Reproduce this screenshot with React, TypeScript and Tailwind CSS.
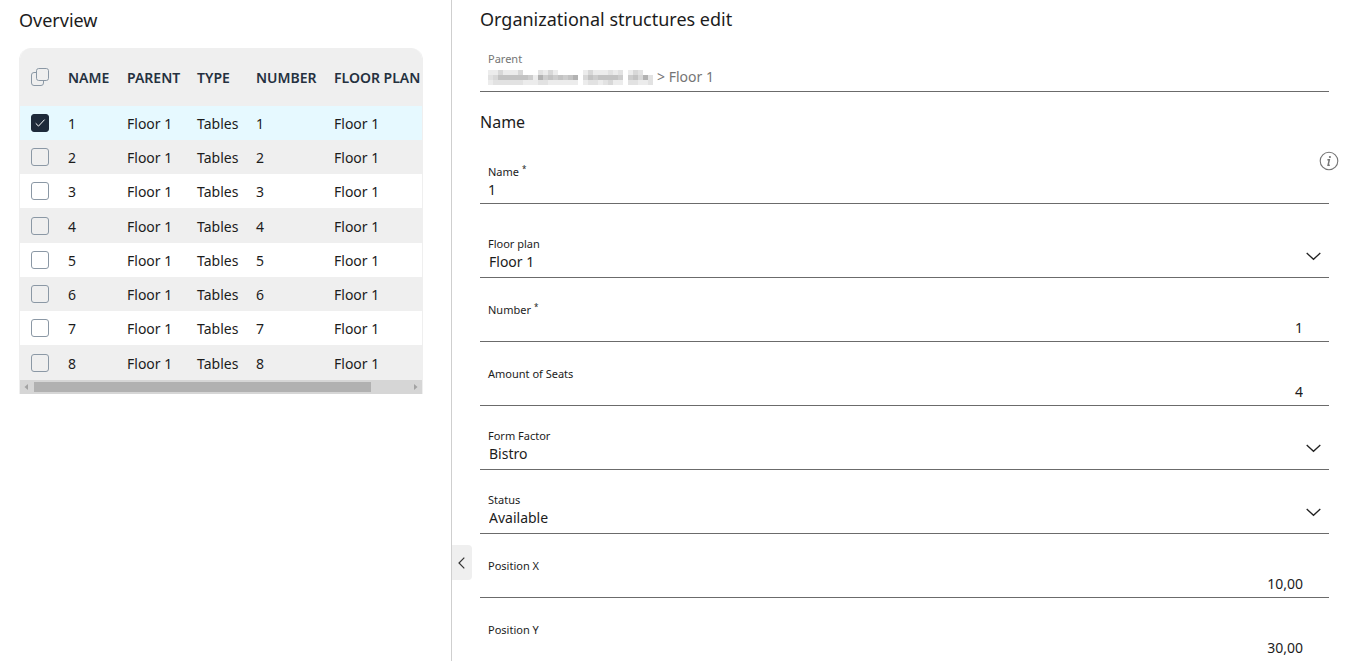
import { useState } from "react";

interface TableRow {
  id: number;
  name: string;
  parent: string;
  type: string;
  number: string;
  floorPlan: string;
}

const ROWS: TableRow[] = [1, 2, 3, 4, 5, 6, 7, 8].map((n) => ({
  id: n,
  name: String(n),
  parent: "Floor 1",
  type: "Tables",
  number: String(n),
  floorPlan: "Floor 1",
}));

// Grey levels of the redacted company name, one digit per 5px block (0 = clear)
const MOSAIC = [
  "113111300021310000013111212013200",
  "235555554164545456035455554045362",
  "122222211122111111012212311022112",
];

const SHADES = ["none", "#ececec", "#e2e2e2", "#d8d8d8", "#cdcdcd", "#c3c3c3", "#b2b2b2"];

function RedactedName() {
  return (
    <svg width="165" height="15" viewBox="0 0 165 15" shapeRendering="crispEdges" aria-label="Hidden company name">
      {MOSAIC.map((line, y) =>
        line.split("").map((level, x) => (
          <rect key={`${x}-${y}`} x={x * 5} y={y * 5} width="5" height="5" fill={SHADES[Number(level)]} />
        ))
      )}
    </svg>
  );
}

function CopyIcon() {
  return (
    <svg width="18" height="18" viewBox="0 0 18 18" fill="none" stroke="#8b98a5" strokeWidth="1">
      <rect x="5.5" y="0.5" width="12" height="12" rx="2.2" />
      <path d="M5.500 4.500H3a2.500 2.500 0 0 0-2.500 2.500v8a2.500 2.500 0 0 0 2.500 2.500h7a2.500 2.500 0 0 0 2.500-2.500v-2.500" />
    </svg>
  );
}

interface FieldProps {
  id: string;
  label: string;
  value: string;
  required?: boolean;
  numeric?: boolean;
}

function TextField({ id, label, value, required, numeric }: FieldProps) {
  return (
    <div className="flex h-16 flex-col justify-end border-b border-[#6b6b6b] px-2 pb-[3px]">
      <label htmlFor={id} className="text-[11px] leading-4">
        {label}
        {required && <span className="relative -top-1 pl-[3px] text-[8px] leading-none">*</span>}
      </label>
      <input
        id={id}
        type="text"
        defaultValue={value}
        className={
          numeric
            ? "h-5 w-full bg-transparent pr-[18px] text-right text-sm outline-none"
            : "h-5 w-full bg-transparent text-sm outline-none"
        }
      />
    </div>
  );
}

function SelectField({ id, label, value }: FieldProps) {
  return (
    <div className="relative flex h-16 flex-col justify-end border-b border-[#6b6b6b] px-2 pb-[5px]">
      <label htmlFor={id} className="text-[11px] leading-4">
        {label}
      </label>
      <select id={id} defaultValue={value} className="h-5 w-full appearance-none bg-transparent pl-px text-sm outline-none">
        <option>{value}</option>
      </select>
      <svg
        className="pointer-events-none absolute right-2 bottom-4 text-[#222222]"
        width="15"
        height="9"
        viewBox="0 0 15 9"
        fill="none"
        stroke="currentColor"
        strokeWidth="1.3"
      >
        <path d="M0.7 1L7.5 7.3L14.3 1" />
      </svg>
    </div>
  );
}

export default function App() {
  const [selected, setSelected] = useState<number[]>([1]);

  const toggle = (id: number) => {
    setSelected((prev) => (prev.includes(id) ? prev.filter((x) => x !== id) : [...prev, id]));
  };

  return (
    <div className="flex h-screen overflow-hidden bg-white font-['Noto_Sans',sans-serif] text-sm text-[#1c1c1c]">
      {/* Overview list */}
      <aside className="w-[452px] shrink-0 border-r border-[#cfcfcf] pt-2 pr-7 pl-[19px]">
        <h1 className="text-lg leading-6">Overview</h1>

        <div className="mt-4 overflow-hidden rounded-t-xl border-x border-[#efefef]">
          <table className="w-full table-fixed border-collapse text-left">
            <colgroup>
              <col className="w-12" />
              <col className="w-[59px]" />
              <col className="w-[70px]" />
              <col className="w-[59px]" />
              <col className="w-[78px]" />
              <col />
            </colgroup>
            <thead>
              <tr className="h-[58px] bg-[#efefef] whitespace-nowrap text-[#25313f]">
                <th className="pl-[11px]">
                  <button type="button" aria-label="Select all" className="block">
                    <CopyIcon />
                  </button>
                </th>
                <th className="pt-[2px] font-semibold">NAME</th>
                <th className="pt-[2px] font-semibold">PARENT</th>
                <th className="pt-[2px] font-semibold">TYPE</th>
                <th className="pt-[2px] font-semibold">NUMBER</th>
                <th className="pt-[2px] font-semibold">FLOOR PLAN</th>
              </tr>
            </thead>
            <tbody>
              {ROWS.map((row) => {
                const checked = selected.includes(row.id);
                return (
                  <tr
                    key={row.id}
                    className={
                      checked
                        ? "h-[34px] bg-[#e6f9ff] nth-[4n]:h-[35px]"
                        : "h-[34px] even:bg-[#efefef] nth-[4n]:h-[35px]"
                    }
                  >
                    <td className="pl-[11px]">
                      <label className="relative block size-[18px]">
                        <input
                          type="checkbox"
                          checked={checked}
                          onChange={() => toggle(row.id)}
                          aria-label={`Select table ${row.name}`}
                          className="block size-[18px] appearance-none rounded-[3px] border border-[#8b98a5] checked:border-[#1e2a3a] checked:bg-[#1e2a3a]"
                        />
                        {checked && (
                          <svg
                            className="pointer-events-none absolute inset-0"
                            width="18"
                            height="18"
                            viewBox="0 0 18 18"
                            fill="none"
                            stroke="#ffffff"
                            strokeWidth="1"
                          >
                            <path d="M4.7 9.3L7.500 12.100L13.600 5.600" />
                          </svg>
                        )}
                      </label>
                    </td>
                    <td className="pt-[2px]">{row.name}</td>
                    <td className="pt-[2px]">{row.parent}</td>
                    <td className="pt-[2px]">{row.type}</td>
                    <td className="pt-[2px]">{row.number}</td>
                    <td className="pt-[2px]">{row.floorPlan}</td>
                  </tr>
                );
              })}
            </tbody>
          </table>

          {/* Horizontal scrollbar */}
          <div className="flex h-[14px] items-center bg-[#d6d6d6] text-[#a3a3a3]">
            <svg className="w-[14px] shrink-0" height="8" viewBox="0 0 14 8" fill="currentColor">
              <path d="M8 1v6L4.500 4z" />
            </svg>
            <div className="h-[10px] flex-1">
              <div className="h-full w-[90%] bg-[#b1b1b1]" />
            </div>
            <svg className="w-[14px] shrink-0" height="8" viewBox="0 0 14 8" fill="currentColor">
              <path d="M6 1v6l3.500-3z" />
            </svg>
          </div>
        </div>
      </aside>

      {/* Edit form */}
      <main className="relative min-w-0 flex-1 pt-[7px] pr-8 pl-7">
        <button
          type="button"
          aria-label="Collapse overview"
          className="absolute top-[545px] left-0 flex h-[35px] w-5 items-center justify-center rounded-r bg-[#efefef] pr-px"
        >
          <svg width="7" height="12" viewBox="0 0 7 12" fill="none" stroke="#333333" strokeWidth="1.2">
            <path d="M6.300 0.700L1 6l5.300 5.300" />
          </svg>
        </button>

        <h2 className="text-lg leading-6">Organizational structures edit</h2>

        <div className="flex h-[61px] flex-col justify-end border-b border-[#6b6b6b] px-2 pb-1 text-[#757575]">
          <span className="text-[11px] leading-4">Parent</span>
          <div className="flex h-5 items-center gap-1">
            <RedactedName />
            <span>&gt; Floor 1</span>
          </div>
        </div>

        <h3 className="mt-[18px] text-base leading-6">Name</h3>

        <form className="mt-[6px]">
          <div className="relative">
            <TextField id="name" label="Name" value="1" required />
            <button type="button" aria-label="Information" className="absolute top-[11px] -right-[10px]">
              <svg width="20" height="20" viewBox="0 0 20 20" fill="none" stroke="#757575">
                <circle cx="10" cy="10" r="8.800" strokeWidth="1.100" />
                <circle cx="10.900" cy="6" r="1.100" fill="#757575" stroke="none" />
                <path d="M8.400 8.700h1.900L9.100 14.200h1.700" strokeWidth="1.500" />
              </svg>
            </button>
          </div>
          <div className="mt-[10px]">
            <SelectField id="floor-plan" label="Floor plan" value="Floor 1" />
          </div>
          <TextField id="number" label="Number" value="1" required numeric />
          <TextField id="seats" label="Amount of Seats" value="4" numeric />
          <SelectField id="form-factor" label="Form Factor" value="Bistro" />
          <SelectField id="status" label="Status" value="Available" />
          <TextField id="position-x" label="Position X" value="10,00" numeric />
          <TextField id="position-y" label="Position Y" value="30,00" numeric />
        </form>
      </main>
    </div>
  );
}
